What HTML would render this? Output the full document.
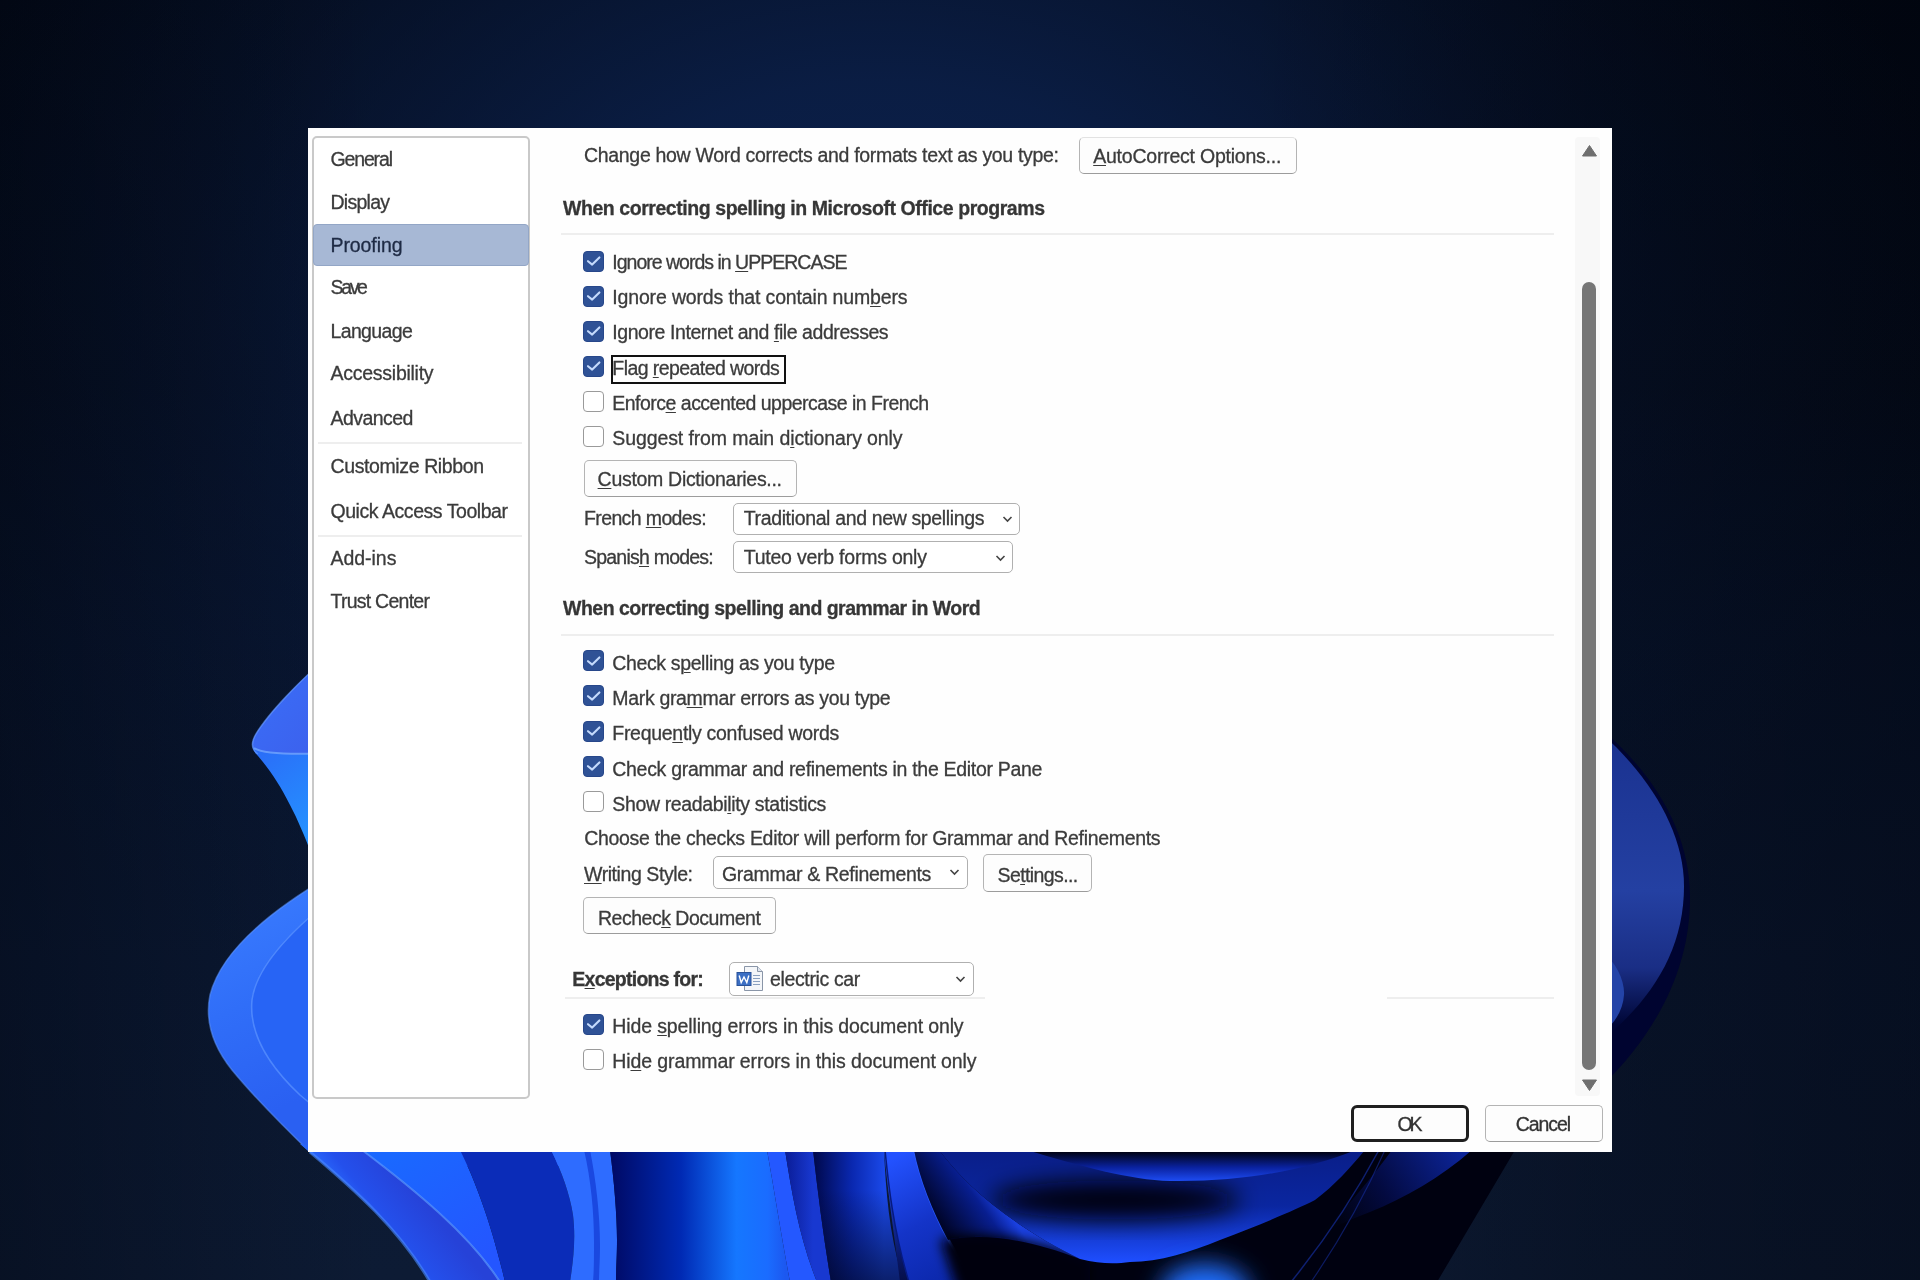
<!DOCTYPE html>
<html><head><meta charset="utf-8">
<style>
html,body{margin:0;padding:0;width:1920px;height:1280px;overflow:hidden;background:#050d1e}
body{position:relative;font-family:"Liberation Sans",sans-serif}
#bg{position:absolute;left:0;top:0}
#dlg{position:absolute;left:308px;top:128px;width:1304px;height:1024px;background:#fefefe;overflow:hidden}
.t{position:absolute;white-space:nowrap;filter:blur(0.35px);-webkit-text-stroke:0.3px currentColor}
.t u{text-decoration:underline;text-underline-offset:2px;text-decoration-thickness:1px}
.sidebar{position:absolute;box-sizing:border-box;border:2px solid #c9c9c9;border-radius:5px;background:#fff}
.sel{position:absolute;box-sizing:border-box;background:#a7b8d5;border:1.5px solid #93a6c6;border-radius:4px}
.sep{position:absolute;height:2px;background:#eeeeee}
.btn{position:absolute;box-sizing:border-box;border:1.5px solid #b4b4b4;border-bottom-color:#9c9c9c;border-radius:5px;background:#fdfdfd}
.ok{border:3px solid #1f1f1f;border-radius:6px}
.dd{position:absolute;box-sizing:border-box;border:1.5px solid #b0b0b0;border-radius:5px;background:#fff}
.focus{position:absolute;box-sizing:border-box;border:2.5px solid #111}
.cb{position:absolute;width:21px;height:21px;box-sizing:border-box;border-radius:4px}
.cb svg{position:absolute;left:-1.5px;top:-1.5px}
.on{background:#2f5296;border:1.5px solid #27478a}
.off{background:#fff;border:1.5px solid #9a9a9a}
.chev{position:absolute}
.track{position:absolute;background:#f8f8f8;border-radius:4px}
.thumb{position:absolute;background:#767676;border-radius:7px}
</style></head><body>
<svg id="bg" width="1920" height="1280" viewBox="0 0 1920 1280">
<defs>
<linearGradient id="bgl" x1="0" y1="0" x2="0" y2="1280" gradientUnits="userSpaceOnUse">
<stop offset="0" stop-color="#020814"/><stop offset="0.3" stop-color="#050d1c"/><stop offset="0.5" stop-color="#08142b"/><stop offset="0.75" stop-color="#0b1933"/><stop offset="1" stop-color="#0d1b34"/>
</linearGradient>
<radialGradient id="bgr" cx="880" cy="320" r="800" gradientUnits="userSpaceOnUse" gradientTransform="translate(880 320) scale(1.35 1) translate(-880 -320)">
<stop offset="0" stop-color="#0c2250" stop-opacity="1"/><stop offset="0.3" stop-color="#0b1f48" stop-opacity="0.9"/><stop offset="0.65" stop-color="#0a1a3c" stop-opacity="0.45"/><stop offset="1" stop-color="#0a1a3a" stop-opacity="0"/>
</radialGradient>
<linearGradient id="bgrt" x1="1250" y1="0" x2="1920" y2="0" gradientUnits="userSpaceOnUse">
<stop offset="0" stop-color="#00020a" stop-opacity="0"/><stop offset="0.5" stop-color="#00020a" stop-opacity="0.3"/><stop offset="1" stop-color="#00020a" stop-opacity="0.45"/>
</linearGradient>
<linearGradient id="lp1" x1="252" y1="700" x2="308" y2="750" gradientUnits="userSpaceOnUse">
<stop offset="0" stop-color="#3a6cf6"/><stop offset="1" stop-color="#3c62ee"/>
</linearGradient>
<linearGradient id="lp2" x1="255" y1="755" x2="308" y2="830" gradientUnits="userSpaceOnUse">
<stop offset="0" stop-color="#2a6ef8"/><stop offset="1" stop-color="#2590ff"/>
</linearGradient>
<linearGradient id="lo" x1="210" y1="900" x2="300" y2="1100" gradientUnits="userSpaceOnUse">
<stop offset="0" stop-color="#3a7cff"/><stop offset="0.5" stop-color="#306ef8"/><stop offset="1" stop-color="#2a60f2"/>
</linearGradient>
<linearGradient id="rp" x1="0" y1="740" x2="0" y2="1075" gradientUnits="userSpaceOnUse">
<stop offset="0" stop-color="#1a3290"/><stop offset="0.45" stop-color="#2440a2"/><stop offset="0.68" stop-color="#1a2e85"/><stop offset="0.85" stop-color="#000636"/><stop offset="1" stop-color="#000320"/>
</linearGradient>
<linearGradient id="bAB" x1="345" y1="1205" x2="395" y2="1165" gradientUnits="userSpaceOnUse">
<stop offset="0" stop-color="#2a6cff"/><stop offset="0.35" stop-color="#2450ec"/><stop offset="1" stop-color="#2642d8"/>
</linearGradient>
<linearGradient id="b5" x1="612" y1="0" x2="785" y2="0" gradientUnits="userSpaceOnUse">
<stop offset="0" stop-color="#000a66"/><stop offset="0.4" stop-color="#002ab4"/><stop offset="0.72" stop-color="#1577ff"/><stop offset="0.9" stop-color="#1a6cff"/><stop offset="1" stop-color="#1c58f0"/>
</linearGradient>
<linearGradient id="bw" x1="0" y1="1150" x2="0" y2="1262" gradientUnits="userSpaceOnUse">
<stop offset="0" stop-color="#0a1e88"/><stop offset="0.5" stop-color="#0a26a0"/><stop offset="1" stop-color="#1e4eff"/>
</linearGradient>
<linearGradient id="lens" x1="0" y1="1182" x2="0" y2="1250" gradientUnits="userSpaceOnUse">
<stop offset="0" stop-color="#000008" stop-opacity="1"/><stop offset="0.45" stop-color="#000210" stop-opacity="0.9"/><stop offset="1" stop-color="#000a40" stop-opacity="0"/>
</linearGradient>
<linearGradient id="tw" x1="0" y1="1152" x2="0" y2="1183" gradientUnits="userSpaceOnUse">
<stop offset="0" stop-color="#000214"/><stop offset="0.5" stop-color="#0a22a0"/><stop offset="1" stop-color="#2052ff"/>
</linearGradient>
<linearGradient id="b2" x1="914" y1="0" x2="960" y2="0" gradientUnits="userSpaceOnUse">
<stop offset="0" stop-color="#041680"/><stop offset="0.7" stop-color="#0a28b0"/><stop offset="1" stop-color="#1a44f0"/>
</linearGradient>
<radialGradient id="blob" cx="1205" cy="1292" r="50" gradientUnits="userSpaceOnUse">
<stop offset="0" stop-color="#2070ff"/><stop offset="0.55" stop-color="#1a58f0"/><stop offset="1" stop-color="#1a55f0" stop-opacity="0"/>
</radialGradient>
<linearGradient id="w3" x1="1460" y1="1152" x2="1340" y2="1230" gradientUnits="userSpaceOnUse">
<stop offset="0" stop-color="#0c2498"/><stop offset="0.6" stop-color="#030a40"/><stop offset="1" stop-color="#000210"/>
</linearGradient>
<filter id="blur12" x="-50%" y="-50%" width="200%" height="200%"><feGaussianBlur stdDeviation="12"/></filter>
<filter id="blur6" x="-50%" y="-50%" width="200%" height="200%"><feGaussianBlur stdDeviation="6"/></filter>
<clipPath id="bwclip"><path d="M939 1150 C965 1185 1010 1225 1080 1259 C1100 1264 1115 1264 1130 1262 C1160 1262 1190 1252 1220 1240 C1260 1225 1295 1210 1315 1200 C1335 1185 1350 1168 1365 1150 Z"/></clipPath>
<clipPath id="bottomclip"><rect x="0" y="1152" width="1920" height="130"/></clipPath>
<linearGradient id="bBC" x1="400" y1="1150" x2="480" y2="1260" gradientUnits="userSpaceOnUse">
<stop offset="0" stop-color="#1a68ff"/><stop offset="1" stop-color="#2456ff"/>
</linearGradient>
<linearGradient id="bF3" x1="813" y1="0" x2="884" y2="0" gradientUnits="userSpaceOnUse">
<stop offset="0" stop-color="#00084a"/><stop offset="0.55" stop-color="#0a28b0"/><stop offset="1" stop-color="#1a48e8"/>
</linearGradient>
<linearGradient id="bF2" x1="785" y1="0" x2="813" y2="0" gradientUnits="userSpaceOnUse">
<stop offset="0" stop-color="#0a1c96"/><stop offset="1" stop-color="#1838d0"/>
</linearGradient>
<linearGradient id="bF4" x1="0" y1="1150" x2="0" y2="1282" gradientUnits="userSpaceOnUse">
<stop offset="0" stop-color="#2552f5"/><stop offset="1" stop-color="#0c1e90"/>
</linearGradient>
<linearGradient id="fdark" x1="0" y1="1190" x2="0" y2="1282" gradientUnits="userSpaceOnUse">
<stop offset="0" stop-color="#000418" stop-opacity="0"/><stop offset="1" stop-color="#000418" stop-opacity="0.6"/>
</linearGradient>
<linearGradient id="band1" x1="890" y1="1160" x2="960" y2="1282" gradientUnits="userSpaceOnUse">
<stop offset="0" stop-color="#2352ff"/><stop offset="0.5" stop-color="#1434c8"/><stop offset="1" stop-color="#0a26a8"/>
</linearGradient>
<linearGradient id="band2" x1="925" y1="1200" x2="975" y2="1165" gradientUnits="userSpaceOnUse">
<stop offset="0" stop-color="#00052a"/><stop offset="0.7" stop-color="#081e90"/><stop offset="1" stop-color="#1a40e0"/>
</linearGradient>
<linearGradient id="bglt" x1="0" y1="0" x2="380" y2="0" gradientUnits="userSpaceOnUse">
<stop offset="0" stop-color="#00030c" stop-opacity="0.4"/><stop offset="1" stop-color="#00030c" stop-opacity="0"/>
</linearGradient>
</defs>
<rect width="1920" height="1280" fill="url(#bgl)"/>
<rect width="1920" height="1280" fill="url(#bgr)"/>
<rect width="1920" height="1280" fill="url(#bgrt)"/>
<rect width="1920" height="1280" fill="url(#bglt)"/>

<!-- left upper petal -->
<path d="M330 655 C300 680 268 714 256 734 C250 744 252 750 258 756 C270 770 280 785 290 805 C298 820 304 835 312 855 L330 870 Z" fill="url(#lp2)"/>
<path d="M330 655 C300 680 268 714 256 734 C250 744 252 750 262 752 C280 755 300 755 330 753 Z" fill="url(#lp1)"/>
<path d="M254 748 C262 753 285 755 330 753" fill="none" stroke="#74acff" stroke-width="2" opacity="0.75"/>
<path d="M330 655 C300 680 268 714 256 734 C250 744 252 750 258 754" fill="none" stroke="#6a9cff" stroke-width="1.5" opacity="0.6"/>

<!-- left lower petal -->
<path d="M330 876 C275 908 222 948 210 995 C205 1020 212 1045 232 1070 C255 1098 285 1128 312 1154 L330 1166 L560 1166 L560 870 Z" fill="url(#lo)"/>
<path d="M330 900 C290 932 256 968 252 1000 C249 1030 265 1062 300 1095 L330 1120 Z" fill="#2764f5"/>
<path d="M330 900 C290 932 256 968 252 1000 C249 1030 265 1062 300 1095 L330 1120" fill="none" stroke="#5c94ff" stroke-width="1.6" opacity="0.7"/>
<path d="M330 876 C275 908 222 948 210 995 C205 1020 212 1045 232 1070 C255 1098 285 1128 312 1154" fill="none" stroke="#5f98ff" stroke-width="1.6" opacity="0.5"/>

<!-- right petal -->
<path d="M1600 728 C1652 772 1690 830 1690 898 C1690 965 1660 1030 1600 1088 Z" fill="#000430"/>
<path d="M1600 732 C1650 776 1684 832 1684 886 C1684 950 1652 1000 1600 1042 Z" fill="url(#rp)"/>
<path d="M1600 950 C1617 962 1625 982 1624 995 C1623 1010 1615 1024 1600 1035 Z" fill="#2444a8"/>

<!-- bottom strip -->
<!-- band A-B -->
<path d="M300 1144 L362 1150 C415 1190 470 1235 500 1282 L430 1282 C400 1230 355 1190 300 1144 Z" fill="url(#bAB)"/>
<path d="M310 1152 C355 1190 400 1230 430 1282" fill="none" stroke="#4a88ff" stroke-width="3" opacity="0.6"/>
<!-- band B-C -->
<path d="M362 1150 L460 1150 C475 1180 492 1225 505 1282 L500 1282 C470 1235 415 1190 362 1150 Z" fill="url(#bBC)"/>
<path d="M362 1150 C415 1190 470 1235 500 1282" fill="none" stroke="#5a96ff" stroke-width="2" opacity="0.7"/>
<!-- C-D dark blue -->
<path d="M460 1150 L551 1150 C562 1172 570 1195 573 1215 C576 1240 573 1262 570 1282 L505 1282 C492 1225 475 1180 460 1150 Z" fill="#0b2cb8"/>
<!-- bright bands D-E -->
<path d="M551 1150 L610 1150 C614 1180 617 1215 617 1240 C617 1258 616 1270 616 1282 L570 1282 C573 1262 576 1240 573 1215 C570 1195 562 1172 551 1150 Z" fill="#2e6cff"/>
<path d="M584 1150 L590 1150 C596 1180 600 1215 600 1245 C600 1262 599 1272 599 1282 L593 1282 C594 1270 594 1258 594 1242 C594 1212 591 1180 584 1150 Z" fill="#1a48e0"/>
<!-- gradient body -->
<path d="M610 1150 L767 1150 C775 1195 782 1240 790 1282 L616 1282 C616 1270 617 1258 617 1240 C617 1215 614 1180 610 1150 Z" fill="url(#b5)"/>
<!-- F bands -->
<path d="M767 1150 L785 1150 C792 1195 800 1240 817 1282 L790 1282 C782 1240 775 1195 767 1150 Z" fill="#2458ff"/>
<path d="M785 1150 L813 1150 C818 1195 824 1240 831 1282 L817 1282 C800 1240 792 1195 785 1150 Z" fill="url(#bF2)"/>
<path d="M813 1150 L884 1150 C886 1195 890 1240 904 1282 L831 1282 C824 1240 818 1195 813 1150 Z" fill="url(#bF3)"/>
<path d="M870 1150 L885 1150 C888 1180 893 1230 909 1282 L900 1282 C895 1240 888 1195 884 1150 Z" fill="url(#bF4)"/>
<path d="M818 1190 L940 1190 L940 1282 L831 1282 C826 1250 821 1220 818 1190 Z" fill="url(#fdark)"/>
<!-- right complex base -->
<path d="M914 1150 L1515 1150 L1437 1282 L909 1282 Z" fill="#000110"/>
<!-- band 1 -->
<path d="M885 1150 L914 1150 C922 1185 940 1235 976 1282 L909 1282 C893 1230 888 1180 885 1150 Z" fill="url(#band1)"/>
<path d="M914 1150 C922 1185 940 1235 976 1282" fill="none" stroke="#2a5cff" stroke-width="2.5" opacity="0.8"/>
<path d="M885 1150 C888 1180 893 1230 909 1282" fill="none" stroke="#061a80" stroke-width="1.5"/>
<!-- band 2 -->
<path d="M914 1150 L939 1150 C965 1185 1010 1225 1080 1259 C1030 1240 985 1232 948 1240 C932 1210 920 1180 914 1150 Z" fill="url(#band2)"/>
<g clip-path="url(#bottomclip)"><path d="M940 1240 C990 1230 1040 1240 1090 1262 L1090 1300 L960 1300 Z" fill="#000008" filter="url(#blur6)"/></g>
<!-- big wave -->
<path id="bwp" d="M939 1150 C965 1185 1010 1225 1080 1259 C1100 1264 1115 1264 1130 1262 C1160 1262 1190 1252 1220 1240 C1260 1225 1295 1210 1315 1200 C1335 1185 1350 1168 1365 1150 Z" fill="url(#bw)"/>
<g clip-path="url(#bwclip)"><ellipse cx="1115" cy="1200" rx="125" ry="20" fill="#000008" filter="url(#blur12)"/></g>
<!-- top wave -->
<path d="M1027 1150 C1080 1166 1130 1180 1170 1181 C1250 1182 1310 1168 1356 1150 Z" fill="url(#tw)"/>
<!-- blob -->
<g clip-path="url(#bottomclip)"><ellipse cx="1205" cy="1292" rx="45" ry="28" fill="#2070ff" filter="url(#blur12)"/></g>
<!-- top-right wave -->
<path d="M1392 1150 L1472 1150 C1440 1178 1405 1198 1370 1212 C1345 1222 1330 1228 1318 1236 C1345 1210 1370 1180 1392 1150 Z" fill="url(#w3)"/>
<path d="M1379 1150 C1355 1195 1325 1240 1291 1282" fill="none" stroke="#1734b0" stroke-width="1.5" opacity="0.6"/>
<path d="M1385 1150 C1365 1195 1340 1240 1311 1282" fill="none" stroke="#1734b0" stroke-width="1.2" opacity="0.5"/>
</svg>

<div id="dlg">
<div class="sidebar" style="left:4.0px;top:8.0px;width:218.0px;height:963.0px;"></div>
<div class="sel" style="left:5.0px;top:95.5px;width:216.0px;height:42.5px;"></div>
<div class="sep" style="left:10px;top:313.5px;width:204px"></div>
<div class="sep" style="left:10px;top:406.5px;width:204px"></div>
<div class="t" style="left:22.5px;top:19.7px;font-size:19.5px;line-height:23px;letter-spacing:-1.146px;color:#3b3b3b">General</div>
<div class="t" style="left:22.5px;top:62.7px;font-size:19.5px;line-height:23px;letter-spacing:-0.740px;color:#3b3b3b">Display</div>
<div class="t" style="left:22.5px;top:105.9px;font-size:19.5px;line-height:23px;letter-spacing:-0.090px;color:#1e2a44">Proofing</div>
<div class="t" style="left:22.5px;top:148.1px;font-size:19.5px;line-height:23px;letter-spacing:-2.349px;color:#3b3b3b">Save</div>
<div class="t" style="left:22.5px;top:192.1px;font-size:19.5px;line-height:23px;letter-spacing:-0.638px;color:#3b3b3b">Language</div>
<div class="t" style="left:22.5px;top:234.3px;font-size:19.5px;line-height:23px;letter-spacing:-0.258px;color:#3b3b3b">Accessibility</div>
<div class="t" style="left:22.5px;top:279.2px;font-size:19.5px;line-height:23px;letter-spacing:-0.562px;color:#3b3b3b">Advanced</div>
<div class="t" style="left:22.5px;top:327.3px;font-size:19.5px;line-height:23px;letter-spacing:-0.388px;color:#3b3b3b">Customize Ribbon</div>
<div class="t" style="left:22.5px;top:372.2px;font-size:19.5px;line-height:23px;letter-spacing:-0.451px;color:#3b3b3b">Quick Access Toolbar</div>
<div class="t" style="left:22.5px;top:419.2px;font-size:19.5px;line-height:23px;letter-spacing:-0.037px;color:#3b3b3b">Add-ins</div>
<div class="t" style="left:22.5px;top:461.9px;font-size:19.5px;line-height:23px;letter-spacing:-0.749px;color:#3b3b3b">Trust Center</div>
<div class="t" style="left:276.0px;top:16.2px;font-size:19.5px;line-height:23px;letter-spacing:-0.315px;color:#3b3b3b">Change how Word corrects and formats text as you type:</div>
<div class="btn" style="left:771.0px;top:9.0px;width:217.5px;height:36.5px;border-top-color:#e2e2e2;"></div>
<div class="t" style="left:785.2px;top:16.7px;font-size:19.5px;line-height:23px;letter-spacing:-0.225px;color:#3b3b3b"><u>A</u>utoCorrect Options...</div>
<div class="t" style="left:255.0px;top:69.0px;font-size:19.5px;line-height:23px;letter-spacing:-0.440px;font-weight:bold;color:#363636">When correcting spelling in Microsoft Office programs</div>
<div class="sep" style="left:253px;top:105px;width:993px"></div>
<div class="cb on" style="left:275px;top:122.5px"><svg width="21" height="21" viewBox="0 0 21 21"><path d="M5 11.2 L9.2 14.6 L16.4 7.4" fill="none" stroke="#c4dafc" stroke-width="2.1" stroke-linecap="round" stroke-linejoin="round"/></svg></div>
<div class="t" style="left:304.3px;top:123.0px;font-size:19.5px;line-height:23px;letter-spacing:-0.997px;color:#3b3b3b">Ignore words in <u>U</u>PPERCASE</div>
<div class="cb on" style="left:275px;top:157.6px"><svg width="21" height="21" viewBox="0 0 21 21"><path d="M5 11.2 L9.2 14.6 L16.4 7.4" fill="none" stroke="#c4dafc" stroke-width="2.1" stroke-linecap="round" stroke-linejoin="round"/></svg></div>
<div class="t" style="left:304.3px;top:158.2px;font-size:19.5px;line-height:23px;letter-spacing:-0.158px;color:#3b3b3b">Ignore words that contain num<u>b</u>ers</div>
<div class="cb on" style="left:275px;top:192.8px"><svg width="21" height="21" viewBox="0 0 21 21"><path d="M5 11.2 L9.2 14.6 L16.4 7.4" fill="none" stroke="#c4dafc" stroke-width="2.1" stroke-linecap="round" stroke-linejoin="round"/></svg></div>
<div class="t" style="left:304.3px;top:193.3px;font-size:19.5px;line-height:23px;letter-spacing:-0.431px;color:#3b3b3b">Ignore Internet and <u>f</u>ile addresses</div>
<div class="cb on" style="left:275px;top:227.9px"><svg width="21" height="21" viewBox="0 0 21 21"><path d="M5 11.2 L9.2 14.6 L16.4 7.4" fill="none" stroke="#c4dafc" stroke-width="2.1" stroke-linecap="round" stroke-linejoin="round"/></svg></div>
<div class="t" style="left:304.3px;top:228.5px;font-size:19.5px;line-height:23px;letter-spacing:-0.571px;color:#3b3b3b">Flag <u>r</u>epeated words</div>
<div class="cb off" style="left:275px;top:263.1px"></div>
<div class="t" style="left:304.3px;top:263.6px;font-size:19.5px;line-height:23px;letter-spacing:-0.516px;color:#3b3b3b">Enforc<u>e</u> accented uppercase in French</div>
<div class="cb off" style="left:275px;top:298.2px"></div>
<div class="t" style="left:304.3px;top:298.8px;font-size:19.5px;line-height:23px;letter-spacing:-0.110px;color:#3b3b3b">Suggest from main d<u>i</u>ctionary only</div>
<div class="focus" style="left:302.5px;top:226.5px;width:175.5px;height:29.0px;"></div>
<div class="btn" style="left:275.5px;top:332.0px;width:213.0px;height:37.0px;"></div>
<div class="t" style="left:289.6px;top:339.7px;font-size:19.5px;line-height:23px;letter-spacing:-0.301px;color:#3b3b3b"><u>C</u>ustom Dictionaries...</div>
<div class="t" style="left:276.0px;top:379.2px;font-size:19.5px;line-height:23px;letter-spacing:-0.621px;color:#3b3b3b">French <u>m</u>odes:</div>
<div class="dd" style="left:425.0px;top:375.2px;width:287.4px;height:31.8px;"></div>
<div class="t" style="left:435.7px;top:379.2px;font-size:19.5px;line-height:23px;letter-spacing:-0.356px;color:#3b3b3b">Traditional and new spellings</div>
<svg class="chev" style="left:694px;top:387px" width="11" height="8" viewBox="0 0 11 8"><path d="M1.5 2 L5.5 6 L9.5 2" fill="none" stroke="#444" stroke-width="1.6"/></svg>
<div class="t" style="left:276.0px;top:417.5px;font-size:19.5px;line-height:23px;letter-spacing:-0.780px;color:#3b3b3b">Spanis<u>h</u> modes:</div>
<div class="dd" style="left:425.0px;top:413.0px;width:279.7px;height:31.7px;"></div>
<div class="t" style="left:435.7px;top:417.5px;font-size:19.5px;line-height:23px;letter-spacing:-0.228px;color:#3b3b3b">Tuteo verb forms only</div>
<svg class="chev" style="left:686.5px;top:425.5px" width="11" height="8" viewBox="0 0 11 8"><path d="M1.5 2 L5.5 6 L9.5 2" fill="none" stroke="#444" stroke-width="1.6"/></svg>
<div class="t" style="left:255.0px;top:468.5px;font-size:19.5px;line-height:23px;letter-spacing:-0.508px;font-weight:bold;color:#363636">When correcting spelling and grammar in Word</div>
<div class="sep" style="left:253px;top:505.5px;width:993px"></div>
<div class="cb on" style="left:275px;top:522.3px"><svg width="21" height="21" viewBox="0 0 21 21"><path d="M5 11.2 L9.2 14.6 L16.4 7.4" fill="none" stroke="#c4dafc" stroke-width="2.1" stroke-linecap="round" stroke-linejoin="round"/></svg></div>
<div class="t" style="left:304.3px;top:524.0px;font-size:19.5px;line-height:23px;letter-spacing:-0.371px;color:#3b3b3b">Check s<u>p</u>elling as you type</div>
<div class="cb on" style="left:275px;top:557.4px"><svg width="21" height="21" viewBox="0 0 21 21"><path d="M5 11.2 L9.2 14.6 L16.4 7.4" fill="none" stroke="#c4dafc" stroke-width="2.1" stroke-linecap="round" stroke-linejoin="round"/></svg></div>
<div class="t" style="left:304.3px;top:559.2px;font-size:19.5px;line-height:23px;letter-spacing:-0.328px;color:#3b3b3b">Mark gra<u>m</u>mar errors as you type</div>
<div class="cb on" style="left:275px;top:592.6px"><svg width="21" height="21" viewBox="0 0 21 21"><path d="M5 11.2 L9.2 14.6 L16.4 7.4" fill="none" stroke="#c4dafc" stroke-width="2.1" stroke-linecap="round" stroke-linejoin="round"/></svg></div>
<div class="t" style="left:304.3px;top:594.3px;font-size:19.5px;line-height:23px;letter-spacing:-0.297px;color:#3b3b3b">Freque<u>n</u>tly confused words</div>
<div class="cb on" style="left:275px;top:627.8px"><svg width="21" height="21" viewBox="0 0 21 21"><path d="M5 11.2 L9.2 14.6 L16.4 7.4" fill="none" stroke="#c4dafc" stroke-width="2.1" stroke-linecap="round" stroke-linejoin="round"/></svg></div>
<div class="t" style="left:304.3px;top:629.5px;font-size:19.5px;line-height:23px;letter-spacing:-0.304px;color:#3b3b3b">Check grammar and refinements in the Editor Pane</div>
<div class="cb off" style="left:275px;top:662.9px"></div>
<div class="t" style="left:304.3px;top:664.6px;font-size:19.5px;line-height:23px;letter-spacing:-0.356px;color:#3b3b3b">Show readabi<u>l</u>ity statistics</div>
<div class="t" style="left:276.2px;top:699.4px;font-size:19.5px;line-height:23px;letter-spacing:-0.307px;color:#3b3b3b">Choose the checks Editor will perform for Grammar and Refinements</div>
<div class="t" style="left:276.0px;top:734.9px;font-size:19.5px;line-height:23px;letter-spacing:-0.424px;color:#3b3b3b"><u>W</u>riting Style:</div>
<div class="dd" style="left:405.4px;top:728.3px;width:255.1px;height:33.0px;"></div>
<div class="t" style="left:414.0px;top:734.9px;font-size:19.5px;line-height:23px;letter-spacing:-0.317px;color:#3b3b3b">Grammar &amp; Refinements</div>
<svg class="chev" style="left:640.5px;top:740px" width="11" height="8" viewBox="0 0 11 8"><path d="M1.5 2 L5.5 6 L9.5 2" fill="none" stroke="#444" stroke-width="1.6"/></svg>
<div class="btn" style="left:675.0px;top:726.4px;width:109.0px;height:37.4px;"></div>
<div class="t" style="left:689.5px;top:735.7px;font-size:19.5px;line-height:23px;letter-spacing:-0.601px;color:#3b3b3b">Se<u>t</u>tings...</div>
<div class="btn" style="left:275.2px;top:769.3px;width:192.5px;height:37.2px;"></div>
<div class="t" style="left:290.0px;top:778.5px;font-size:19.5px;line-height:23px;letter-spacing:-0.491px;color:#3b3b3b">Rechec<u>k</u> Document</div>
<div class="t" style="left:264.3px;top:839.8px;font-size:19.5px;line-height:23px;letter-spacing:-0.753px;font-weight:bold;color:#363636">E<u>x</u>ceptions for:</div>
<div class="dd" style="left:420.5px;top:833.8px;width:245.0px;height:33.8px;"></div>
<svg style="position:absolute;left:428px;top:837px" width="28" height="27" viewBox="0 0 28 27">
<path d="M8.5 1.5 H21.5 L26.5 6.5 V25.5 H8.5 Z" fill="#f4f6f9" stroke="#8a96a8" stroke-width="1"/>
<path d="M21.5 1.5 V6.5 H26.5" fill="#dfe5ee" stroke="#8a96a8" stroke-width="1"/>
<path d="M17 10.5 H24 M17 13.5 H24 M17 16.5 H24 M17 19.5 H24" stroke="#8aa0c0" stroke-width="1.2"/>
<rect x="1" y="7.5" width="14" height="13" fill="#3b6fc4" stroke="#2a5399" stroke-width="1"/>
<path d="M3.2 10.5 L5.2 17.5 L8 12 L10.8 17.5 L12.8 10.5" fill="none" stroke="#fff" stroke-width="1.4"/>
</svg>
<div class="t" style="left:462.0px;top:839.8px;font-size:19.5px;line-height:23px;letter-spacing:-0.361px;color:#3b3b3b">electric car</div>
<svg class="chev" style="left:646.5px;top:847px" width="11" height="8" viewBox="0 0 11 8"><path d="M1.5 2 L5.5 6 L9.5 2" fill="none" stroke="#444" stroke-width="1.6"/></svg>
<div class="sep" style="left:257px;top:869px;width:419.6px"></div>
<div class="sep" style="left:1078.7px;top:869px;width:166.89999999999986px"></div>
<div class="cb on" style="left:275px;top:885.6px"><svg width="21" height="21" viewBox="0 0 21 21"><path d="M5 11.2 L9.2 14.6 L16.4 7.4" fill="none" stroke="#c4dafc" stroke-width="2.1" stroke-linecap="round" stroke-linejoin="round"/></svg></div>
<div class="t" style="left:304.3px;top:886.7px;font-size:19.5px;line-height:23px;letter-spacing:-0.129px;color:#3b3b3b">Hide <u>s</u>pelling errors in this document only</div>
<div class="cb off" style="left:275px;top:920.8px"></div>
<div class="t" style="left:304.3px;top:921.9px;font-size:19.5px;line-height:23px;letter-spacing:-0.107px;color:#3b3b3b">Hi<u>d</u>e grammar errors in this document only</div>
<div class="track" style="left:1267.0px;top:9.0px;width:25.0px;height:959.0px;"></div>
<svg style="position:absolute;left:1273.5px;top:17px" width="15" height="12" viewBox="0 0 15 12"><path d="M7.5 0.5 L14.5 11 L0.5 11 Z" fill="#6e6e6e" stroke="#6e6e6e" stroke-linejoin="round" stroke-width="1"/></svg>
<div class="thumb" style="left:1274.0px;top:154.0px;width:14.0px;height:788.0px;"></div>
<svg style="position:absolute;left:1273.5px;top:950.5px" width="15" height="12" viewBox="0 0 15 12"><path d="M0.5 1 L14.5 1 L7.5 11.5 Z" fill="#6e6e6e" stroke="#6e6e6e" stroke-linejoin="round" stroke-width="1"/></svg>
<div class="btn ok" style="left:1043.4px;top:976.7px;width:118.1px;height:37.3px;"></div>
<div class="t" style="left:1089.6px;top:985.4px;font-size:19.5px;line-height:23px;letter-spacing:-3.374px;color:#333">OK</div>
<div class="btn" style="left:1177.0px;top:976.7px;width:118.2px;height:37.3px;"></div>
<div class="t" style="left:1207.7px;top:985.4px;font-size:19.5px;line-height:23px;letter-spacing:-1.040px;color:#333">Cancel</div>
</div>
</body></html>
